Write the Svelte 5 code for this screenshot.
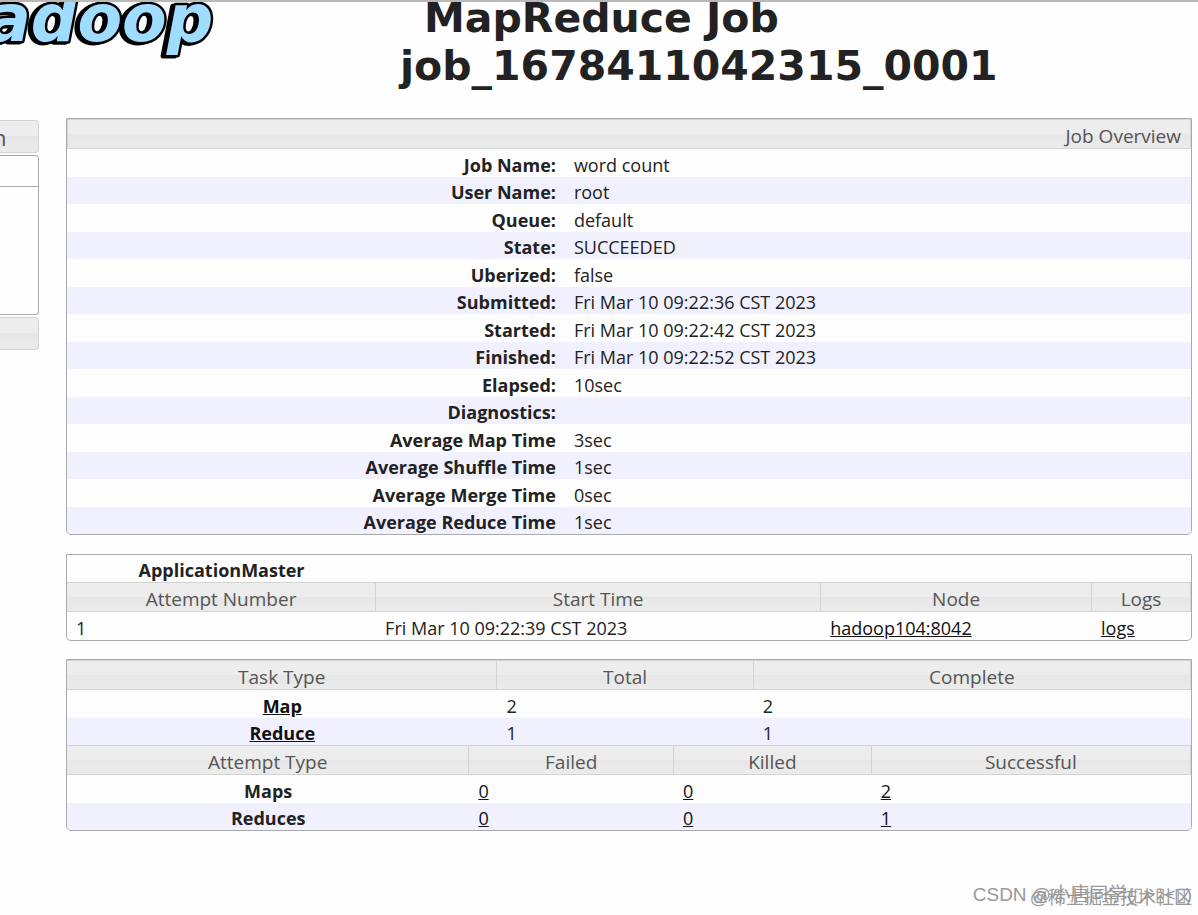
<script>
  const overview = [
    ['Job Name:', 'word count'],
    ['User Name:', 'root'],
    ['Queue:', 'default'],
    ['State:', 'SUCCEEDED'],
    ['Uberized:', 'false'],
    ['Submitted:', 'Fri Mar 10 09:22:36 CST 2023'],
    ['Started:', 'Fri Mar 10 09:22:42 CST 2023'],
    ['Finished:', 'Fri Mar 10 09:22:52 CST 2023'],
    ['Elapsed:', '10sec'],
    ['Diagnostics:', ''],
    ['Average Map Time', '3sec'],
    ['Average Shuffle Time', '1sec'],
    ['Average Merge Time', '0sec'],
    ['Average Reduce Time', '1sec']
  ];

  const tasks = [
    { type: 'Map', total: 2, complete: 2 },
    { type: 'Reduce', total: 1, complete: 1 }
  ];

  const attempts = [
    { type: 'Maps', failed: 0, killed: 0, successful: 2 },
    { type: 'Reduces', failed: 0, killed: 0, successful: 1 }
  ];
</script>

<div class="page">
  <header>
    <svg class="logo" width="220" height="60" viewBox="0 0 220 60" role="img" aria-label="hadoop">
      <text x="-13" y="41">adoop</text>
    </svg>
    <h1>MapReduce Job<br />job_1678411042315_0001</h1>
  </header>

  <div class="layout">
    <nav>
      <h3>n</h3>
      <div class="panel"><div class="panel-head"></div></div>
      <h3></h3>
    </nav>

    <main>
      <div class="box">
        <div class="caption">Job Overview</div>
        <table class="info">
          <tbody>
            {#each overview as [label, value]}
              <tr><th>{label}</th><td>{value}</td></tr>
            {/each}
          </tbody>
        </table>
      </div>

      <div class="box">
        <table class="master">
          <tbody>
            <tr><th>ApplicationMaster</th><td colspan="3"></td></tr>
            <tr class="head">
              <th class="c1">Attempt Number</th>
              <th class="c2">Start Time</th>
              <th class="c3">Node</th>
              <th>Logs</th>
            </tr>
            <tr>
              <td>1</td>
              <td>Fri Mar 10 09:22:39 CST 2023</td>
              <td><a href="#node">hadoop104:8042</a></td>
              <td><a href="#logs">logs</a></td>
            </tr>
          </tbody>
        </table>
      </div>

      <div class="box">
        <table class="tasks">
          <thead>
            <tr class="head">
              <th class="c1">Task Type</th>
              <th class="c2">Total</th>
              <th>Complete</th>
            </tr>
          </thead>
          <tbody>
            {#each tasks as t}
              <tr>
                <th><a href="#{t.type}">{t.type}</a></th>
                <td>{t.total}</td>
                <td>{t.complete}</td>
              </tr>
            {/each}
          </tbody>
        </table>
        <table class="attempts">
          <thead>
            <tr class="head">
              <th class="c1">Attempt Type</th>
              <th class="c2">Failed</th>
              <th class="c3">Killed</th>
              <th>Successful</th>
            </tr>
          </thead>
          <tbody>
            {#each attempts as a}
              <tr>
                <th>{a.type}</th>
                <td><a href="#failed">{a.failed}</a></td>
                <td><a href="#killed">{a.killed}</a></td>
                <td><a href="#successful">{a.successful}</a></td>
              </tr>
            {/each}
          </tbody>
        </table>
      </div>
    </main>
  </div>

  <div class="mark community">@稀土掘金技术社区</div>
  <div class="mark csdn">CSDN @小唐同学(▯&gt;▯&lt;▯)</div>
</div>

<style>
  :global(body) {
    background: #fefefe;
  }

  .page {
    position: relative;
    box-sizing: border-box;
    min-height: 100vh;
    border-top: 2px solid #b9b9b9;
    overflow: hidden;
    font: 18px/24px 'Open Sans', 'Noto Sans CJK SC', sans-serif;
    color: #222;
  }

  header {
    display: flex;
    height: 116px;
    gap: 180px;
  }

  .logo {
    flex: none;
    margin-top: -2px;
  }

  .logo text {
    font: italic bold 65px 'DejaVu Sans', sans-serif;
    fill: #a0dcff;
    stroke: #000;
    stroke-width: 5px;
    stroke-linejoin: round;
    paint-order: stroke;
    filter: drop-shadow(-3px 1px 0 #000);
  }

  h1 {
    margin: -8px 0 0;
    font: bold 41px/48px 'DejaVu Sans', sans-serif;
    text-indent: 24px;
    white-space: nowrap;
  }

  .layout {
    display: flex;
    gap: 27px;
    padding-right: 6px;
  }

  nav {
    flex: 0 0 39px;
    padding-top: 2px;
  }

  nav h3 {
    box-sizing: border-box;
    height: 33px;
    margin: 0 0 2px;
    border: 1px solid #d3d3d3;
    border-left: 0;
    border-radius: 0 4px 4px 0;
    background: linear-gradient(#ededed 50%, #e7e7e7 50%, #ebebeb);
    font-size: 22px;
    font-weight: 400;
    line-height: 32px;
    text-indent: -7px;
    color: #555;
  }

  .panel {
    box-sizing: border-box;
    height: 160px;
    margin-bottom: 2px;
    border: 1px solid #aaa;
    border-left: 0;
    border-radius: 0 4px 4px 0;
  }

  .panel-head {
    height: 30px;
    border-bottom: 1px solid #aaa;
  }

  main {
    flex: 1;
    min-width: 0;
  }

  .box {
    margin-bottom: 18px;
    border: 1px solid #aaa;
    border-radius: 0 0 5px 5px;
    overflow: hidden;
  }

  .box:first-child {
    margin-bottom: 19px;
  }

  .caption,
  .head th {
    box-sizing: border-box;
    height: 30px;
    border: 1px solid #d3d3d3;
    background: linear-gradient(#ededed 50%, #e7e7e7 50%, #ebebeb);
    font-size: 19px;
    font-weight: 400;
    color: #555;
  }

  .caption {
    padding: 4px 9px 0;
    text-align: right;
  }

  table {
    width: 100%;
    border-spacing: 0;
    table-layout: fixed;
  }

  th,
  td {
    box-sizing: border-box;
    height: 28px;
    padding: 3px 9px 0;
  }

  td {
    text-align: left;
  }

  .head th {
    padding: 4px 9px 0;
    border-left: 0;
  }

  .info tr:nth-child(even) > *,
  .tasks tbody tr:nth-child(even) > *,
  .attempts tbody tr:nth-child(even) > * {
    height: 27px;
    background: #f0f0ff;
  }

  .info th {
    width: 44.3%;
    text-align: right;
  }

  .master tr:first-child > th {
    width: 27.5%;
  }

  .master tr:first-child > * {
    height: 27px;
  }

  .master {
    table-layout: auto;
  }

  .master .c2 {
    width: 39.6%;
  }

  .master .c3 {
    width: 24.1%;
  }

  .tasks .c1 {
    width: 38.3%;
  }

  .tasks .c2 {
    width: 22.8%;
  }

  .attempts .c1 {
    width: 35.8%;
  }

  .attempts .c2 {
    width: 18.2%;
  }

  .attempts .c3 {
    width: 17.6%;
  }

  a {
    color: #111;
    text-decoration: underline;
  }

  .mark {
    position: absolute;
    right: 6px;
    font-family: 'Liberation Sans', 'Noto Sans CJK SC', sans-serif;
    font-size: 18px;
    color: #999;
    white-space: nowrap;
  }

  .community {
    bottom: 5px;
  }

  .csdn {
    bottom: 8px;
    font-size: 19px;
  }
</style>
